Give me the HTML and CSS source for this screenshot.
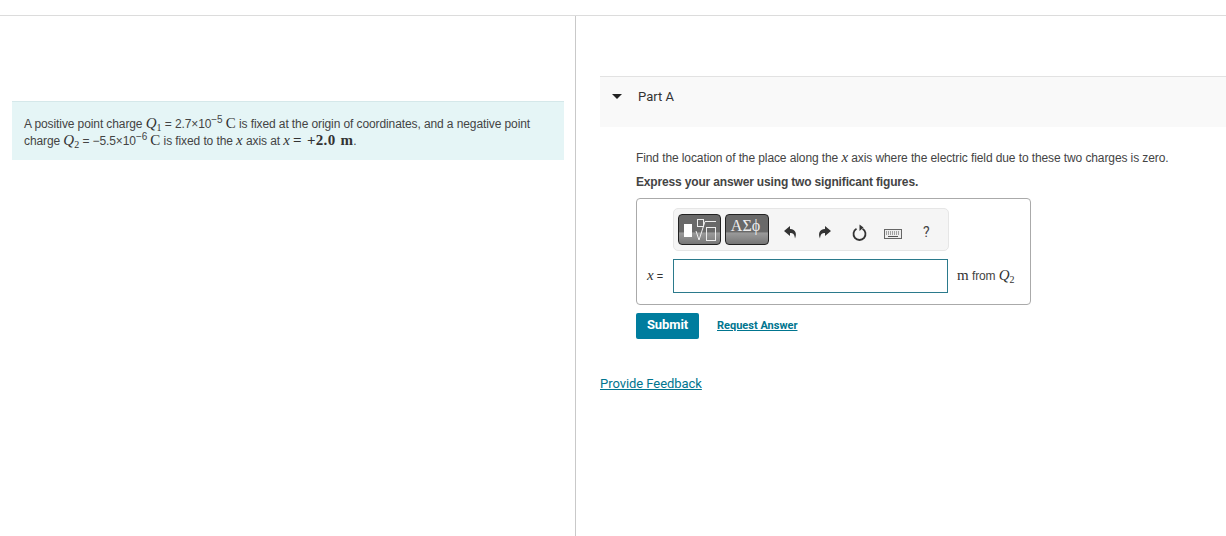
FILE: index.html
```html
<!DOCTYPE html>
<html lang="en">
<head>
<meta charset="utf-8">
<title>Part A</title>
<link rel="stylesheet" href="styles.css">
</head>
<body>
<div class="topbar"></div>
<main class="layout">
  <section class="left">
    <div class="intro">
      <p>A positive point charge <span class="m"><i>Q</i><sub>1</sub></span> = 2.7×10<sup>−5</sup> <span class="m">C</span> is fixed at the origin of coordinates, and a negative point</p>
      <p>charge <span class="m"><i>Q</i><sub>2</sub></span> = −5.5×10<sup>−6</sup> <span class="m">C</span> is fixed to the <span class="x">x</span> axis at <span class="x">x</span> <span class="m val">= +2.0 m</span>.</p>
    </div>
  </section>
  <section class="right">
    <div class="part-head">
      <svg class="caret" width="10" height="5" viewBox="0 0 10 5"><path d="M0 0h10L5 5z" fill="#222"/></svg>
      <span>Part A</span>
    </div>
    <div class="part-body">
      <p class="q">Find the location of the place along the <span class="x">x</span> axis where the electric field due to these two charges is zero.</p>
      <p class="hint">Express your answer using two significant figures.</p>
      <div class="answer">
        <div class="toolbar">
          <div class="tb-btn tpl">
            <svg width="38" height="24" viewBox="0 0 38 24">
              <rect x="3" y="6" width="8" height="13" fill="#fff"/>
              <rect x="16.500" y="1.500" width="6" height="7" fill="none" stroke="#eee"/>
              <path d="M15 13l3 9 6-18.500h11" fill="none" stroke="#eee"/>
              <rect x="25.500" y="9.500" width="9" height="13" fill="none" stroke="#eee"/>
            </svg>
          </div>
          <div class="tb-btn sym">ΑΣϕ</div>
          <svg class="ic undo" width="13" height="13" viewBox="0 0 13 13"><path d="M6 0L0 5l6 5V7c3 0 4.500 1 5 5.500C13 8 12 3.500 6 3z" fill="#333"/></svg>
          <svg class="ic redo" width="13" height="13" viewBox="0 0 13 13"><path d="M7 0l6 5-6 5V7c-3 0-4.500 1-5 5.500C0 8 1 3.500 7 3z" fill="#333"/></svg>
          <svg class="ic reset" width="15" height="17" viewBox="0 0 15 17"><path d="M4.500 4.800a6 6 0 1 0 6 0" fill="none" stroke="#333" stroke-width="1.800"/><path d="M7.500 0.500v6.500l4-3.500z" fill="#333"/></svg>
          <svg class="ic kbd" width="18" height="10" viewBox="0 0 18 10"><rect x=".5" y=".5" width="17" height="9" fill="#eee" stroke="#666"/><path d="M2 3h14M2 5h14" stroke="#555" stroke-dasharray="1 1"/><path d="M4 7.500h10" stroke="#555"/></svg>
          <span class="help">?</span>
        </div>
        <div class="input-row">
          <span class="lbl"><span class="x">x</span> <span class="eq">=</span></span>
          <div class="input"></div>
          <span class="unit"><span class="m">m</span> from <span class="m"><i>Q</i><sub>2</sub></span></span>
        </div>
      </div>
      <div class="actions">
        <button class="submit" type="button">Submit</button>
        <a class="req" href="#">Request Answer</a>
      </div>
    </div>
    <a class="feedback" href="#">Provide Feedback</a>
  </section>
</main>
</body>
</html>
```
FILE: styles.css
```css
* { box-sizing: border-box; }
html, body { margin: 0; height: 100%; overflow: hidden; }
body { background: #fff; color: #333; font: 12px/17px "Liberation Sans", Arial, sans-serif; letter-spacing: -.1px; }
p { margin: 0; }
.topbar { height: 16px; border-bottom: 1px solid #dcdcdc; }
.layout { display: grid; grid-template-columns: 576px 1fr; height: 520px; }
.left { border-right: 1px solid #c9c9c9; padding: 85px 11px 0 12px; }
.intro { height: 59px; background: #e5f5f6; border-top: 1px solid #d5e8ea; padding: 13px 12px 0; color: #444; }
.intro p { height: 17px; white-space: nowrap; }
.m { font-family: "Liberation Serif", serif; font-size: 15px; color: #333; letter-spacing: 0; }
.m sub { font-size: 10px; line-height: 0; vertical-align: -3px; }
.x { font: italic 15px/1 "Liberation Serif", serif; color: #333; letter-spacing: 0; }
.val { font-size: 15px; font-weight: bold; letter-spacing: .3px; word-spacing: 1px; }
sup { font-size: 10px; line-height: 0; vertical-align: 5px; }
.right { padding: 60px 0 0 24px; }
.part-head { height: 51px; background: #f9f9f9; border-top: 1px solid #e2e2e2; display: flex; align-items: flex-start; padding: 11px 0 0 12px; font: 13px/17px Roboto, "Liberation Sans", sans-serif; letter-spacing: 0; color: #333; }
.caret { margin: 6px 16px 0 0; }
.part-body { padding: 23px 0 0 36px; }
.q { height: 17px; color: #444; white-space: nowrap; }
.hint { margin-top: 7px; height: 17px; font-weight: bold; letter-spacing: -.16px; color: #444; }
.answer { margin-top: 7px; width: 395px; height: 107px; border: 1px solid #aaa; border-radius: 4px; padding: 9px 0 0 36px; }
.toolbar { width: 276px; height: 43px; background: #f5f5f5; border: 1px solid #e6e6e6; border-radius: 5px; display: flex; align-items: flex-start; padding: 5px 0 0 4px; }
.tb-btn { height: 31px; border: 1px solid #222; border-radius: 4px; background: linear-gradient(#696969 0, #696969 58%, #9a9a9a 62%, #777 100%); color: #eee; letter-spacing: 0; }
.tpl { width: 43px; display: flex; align-items: center; justify-content: center; }
.sym { width: 44px; margin-left: 4px; padding-right: 3px; font: 16px/22px "Liberation Serif", serif; text-align: center; }
.ic { flex: none; }
.undo { margin: 12px 0 0 15px; }
.redo { margin: 12px 0 0 21px; }
.reset { margin: 10px 0 0 21px; }
.kbd { margin: 15px 0 0 17px; }
.help { margin: 10px 0 0 21px; font: 14px/17px Roboto, sans-serif; color: #444; }
.input-row { display: flex; align-items: center; margin: 8px 0 0 -26px; }
.lbl { width: 26px; font-size: 11px; white-space: nowrap; }
.eq { font-size: 11px; }
.input { width: 275px; height: 34px; border: 1px solid #2b7a8c; background: #fff; flex: none; }
.unit { margin-left: 9px; white-space: nowrap; color: #444; }
.actions { display: flex; align-items: center; margin-top: 8px; }
.submit { width: 63px; height: 26px; padding: 0 0 3px; border: 0; border-radius: 2px; background: #007d9e; color: #fff; font: bold 13px/17px Roboto, "Liberation Sans", Arial, sans-serif; letter-spacing: -.1px; }
.req { margin: 0 0 2px 18px; color: #00758f; font: bold 11px/17px Roboto, sans-serif; letter-spacing: 0; }
.feedback { display: inline-block; margin-top: 36px; color: #00758f; font: 13px/17px Roboto, sans-serif; letter-spacing: -.05px; }
```
